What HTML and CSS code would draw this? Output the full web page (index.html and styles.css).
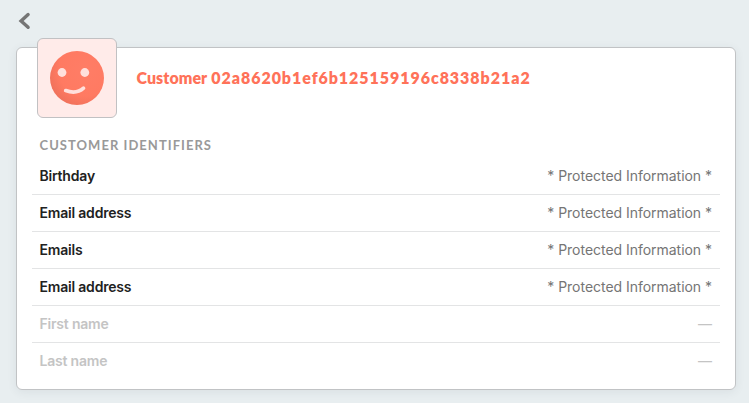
FILE: index.html
```html
<!DOCTYPE html>
<html lang="en">
<head>
<meta charset="utf-8">
<title>Customer</title>
<link rel="stylesheet" href="styles.css">
</head>
<body>
<nav class="nav">
  <svg class="back" width="16" height="20" viewBox="0 0 16 20"><path d="M12.1 4.6 5.1 11l7 6.3" fill="none" stroke="#757575" stroke-width="3.4" stroke-linecap="round" stroke-linejoin="miter"/></svg>
</nav>
<main class="card">
  <header class="header">
    <div class="avatar">
      <svg width="54" height="54" viewBox="0 0 54 54">
        <defs><radialGradient id="face" cx=".65" cy=".35" r=".75"><stop offset="0" stop-color="#ff7d66"/><stop offset=".65" stop-color="#ff7a62"/><stop offset="1" stop-color="#ed705a"/></radialGradient></defs>
        <circle cx="27" cy="27" r="27" fill="url(#face)"/>
        <circle cx="12" cy="21.5" r="4.4" fill="#ffe0dc"/>
        <circle cx="34.8" cy="21.5" r="4.4" fill="#ffe0dc"/>
        <path d="M15.7 39.6Q26.500 43.500 33.500 37.200" fill="none" stroke="#ffe0dc" stroke-width="3.700" stroke-linecap="round"/>
      </svg>
    </div>
    <h1 class="title"><span class="word">Customer</span> <span class="hash">02a8620b1ef6b125159196c8338b21a2</span></h1>
  </header>
  <h2 class="subtitle">CUSTOMER IDENTIFIERS</h2>
  <dl class="list">
    <div class="row"><dt>Birthday</dt><dd>* Protected Information *</dd></div>
    <div class="row"><dt>Email address</dt><dd>* Protected Information *</dd></div>
    <div class="row"><dt>Emails</dt><dd>* Protected Information *</dd></div>
    <div class="row"><dt>Email address</dt><dd>* Protected Information *</dd></div>
    <div class="row empty"><dt>First name</dt><dd>—</dd></div>
    <div class="row empty"><dt>Last name</dt><dd>—</dd></div>
  </dl>
</main>
</body>
</html>
```
FILE: styles.css
```css
* { box-sizing: border-box; }
body {
  margin: 0;
  height: 403px;
  overflow: hidden;
  background: #e8eef0;
  font-family: Inter, "Liberation Sans", sans-serif;
}
.nav { height: 47px; padding: 10px 16px 0; }
.back { display: block; }
.card {
  width: 720px;
  height: 343px;
  margin-left: 16px;
  padding: 0 15px;
  background: #fff;
  border: 1px solid #c1c3c5;
  border-radius: 6px;
  box-shadow: 0 2px 10px rgba(50, 70, 80, .08);
}
.header { display: flex; height: 70px; padding-left: 5px; }
.avatar {
  display: flex;
  align-items: center;
  justify-content: center;
  width: 80px;
  height: 80px;
  margin-top: -10px;
  flex: none;
  background: #ffebe9;
  border: 1px solid #c1c1c3;
  border-radius: 6px;
}
.title {
  display: flex;
  gap: 4px;
  margin: 20px 0 0 19.5px;
  color: #ff7259;
  font: 800 16px/20px Lato, sans-serif;
  white-space: nowrap;
}
.word { letter-spacing: .05px; }
.hash { letter-spacing: .95px; }
.subtitle {
  margin: 18px 0 0 7.5px;
  color: #999;
  font: 700 13px/18px Lato, sans-serif;
  letter-spacing: 1.04px;
}
.list { margin: 4px 0 0; }
.row {
  display: flex;
  align-items: center;
  justify-content: space-between;
  height: 37px;
  padding: 0 8px 2px 7.5px;
  border-bottom: 1px solid #e3e4e5;
  font-size: 14px;
}
.row:last-child { padding-bottom: 3px; border-bottom: 0; }
dt { color: #212121; font-weight: 600; letter-spacing: -.2px; }
dd { margin: 0; color: #757575; letter-spacing: -.03px; }
.empty dt, .empty dd { color: #c4c4c4; }
```
